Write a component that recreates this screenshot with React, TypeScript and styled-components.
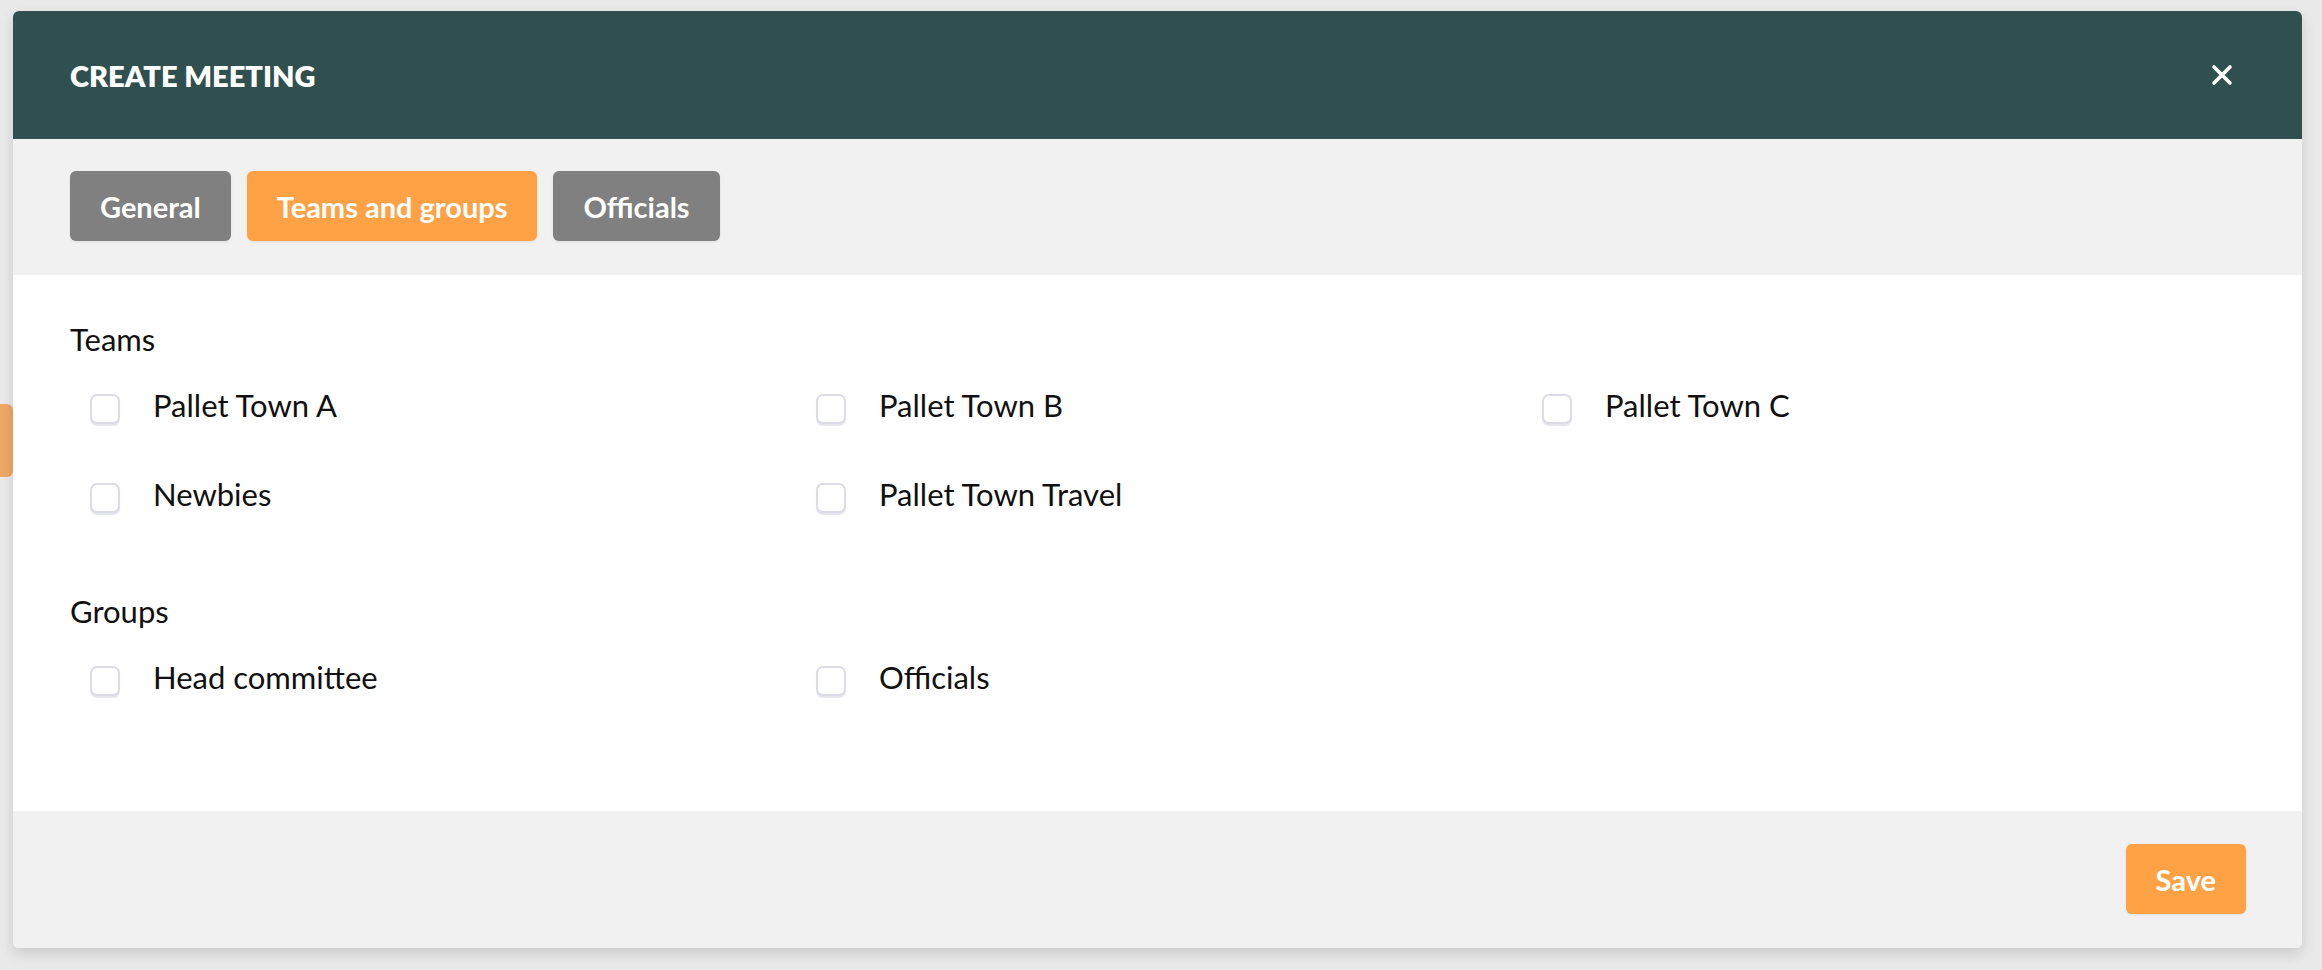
import React from "react";
import styled, { createGlobalStyle } from "styled-components";

const GlobalStyle = createGlobalStyle`
  html, body {
    margin: 0;
    padding: 0;
    background: #e9e9e9;
    font-family: Lato, "Open Sans", "Liberation Sans", sans-serif;
  }
  * { box-sizing: border-box; }
`;

const Page = styled.div`
  position: relative;
  min-height: 970px;
  padding: 11px 20px 0 13px;
  background: #e9e9e9;
  overflow: hidden;
`;

const BehindButton = styled.div`
  position: absolute;
  left: -60px;
  top: 404px;
  width: 73px;
  height: 73px;
  border-radius: 6px;
  background: #eea866;
`;

const Modal = styled.div`
  position: relative;
  display: flex;
  flex-direction: column;
  border-radius: 6px;
  background: #ffffff;
  box-shadow: 0 6px 14px rgba(0, 0, 0, 0.13);
  overflow: hidden;
`;

const Header = styled.div`
  height: 128px;
  display: flex;
  align-items: center;
  justify-content: space-between;
  padding: 0 60px 0 57px;
  background: #30504f;
`;

const Title = styled.h1`
  margin: 0;
  color: #ffffff;
  font-size: 29px;
  font-weight: 800;
  letter-spacing: 0;
  text-transform: uppercase;
`;

const CloseButton = styled.button`
  width: 40px;
  height: 40px;
  display: flex;
  align-items: center;
  justify-content: center;
  padding: 0;
  border: none;
  background: transparent;
  cursor: pointer;
`;

const TabBar = styled.div`
  display: flex;
  gap: 16px;
  padding: 32px 57px 34px;
  background: #f1f1f1;
`;

const Button = styled.button<{ $active?: boolean }>`
  height: 70px;
  padding: 0 30px;
  border: none;
  border-radius: 6px;
  background: ${(p) => (p.$active ? "#ffa245" : "#808080")};
  color: #ffffff;
  font-family: Lato, "Open Sans", sans-serif;
  font-size: 29px;
  font-weight: 700;
  box-shadow: 0 1px 3px rgba(0, 0, 0, 0.08);
  cursor: pointer;
`;

const Content = styled.div`
  height: 536px;
  padding: 46px 84px 0 57px;
  background: #ffffff;
`;

const Section = styled.section<{ $spaced?: boolean }>`
  margin-top: ${(p) => (p.$spaced ? "69px" : "0")};
`;

const SectionLabel = styled.div`
  height: 36px;
  line-height: 36px;
  margin-bottom: 18px;
  font-size: 31px;
  color: #111111;
`;

const Grid = styled.div`
  display: grid;
  grid-template-columns: repeat(3, 1fr);
  column-gap: 30px;
  row-gap: 29px;
`;

const Item = styled.label`
  height: 60px;
  display: flex;
  align-items: center;
  gap: 33px;
  padding-left: 20px;
  font-size: 31px;
  color: #111111;
  cursor: pointer;
`;

const Box = styled.span`
  width: 30px;
  height: 30px;
  margin-top: 7px;
  flex: none;
  border: 2px solid #dcdce4;
  border-radius: 7px;
  background: #ffffff;
  box-shadow: 0 2px 1px rgba(180, 180, 200, 0.35);
`;

const Footer = styled.div`
  height: 137px;
  display: flex;
  align-items: flex-start;
  justify-content: flex-end;
  padding: 33px 56px 0 57px;
  background: #f1f1f1;
`;

const teams = [
  "Pallet Town A",
  "Pallet Town B",
  "Pallet Town C",
  "Newbies",
  "Pallet Town Travel",
];
const groups = ["Head committee", "Officials"];

const CloseIcon = () => (
  <svg width="22" height="22" viewBox="0 0 22 22" fill="none">
    <path d="M3 3 L19 19 M19 3 L3 19" stroke="#ffffff" strokeWidth="3.6" strokeLinecap="round" />
  </svg>
);

export default function App() {
  return (
    <>
      <GlobalStyle />
      <Page>
        <BehindButton />
        <Modal>
          <Header>
            <Title>Create meeting</Title>
            <CloseButton aria-label="Close">
              <CloseIcon />
            </CloseButton>
          </Header>
          <TabBar>
            <Button>General</Button>
            <Button $active>Teams and groups</Button>
            <Button>Officials</Button>
          </TabBar>
          <Content>
            <Section>
              <SectionLabel>Teams</SectionLabel>
              <Grid>
                {teams.map((t) => (
                  <Item key={t}>
                    <Box />
                    {t}
                  </Item>
                ))}
              </Grid>
            </Section>
            <Section $spaced>
              <SectionLabel>Groups</SectionLabel>
              <Grid>
                {groups.map((g) => (
                  <Item key={g}>
                    <Box />
                    {g}
                  </Item>
                ))}
              </Grid>
            </Section>
          </Content>
          <Footer>
            <Button $active>Save</Button>
          </Footer>
        </Modal>
      </Page>
    </>
  );
}
